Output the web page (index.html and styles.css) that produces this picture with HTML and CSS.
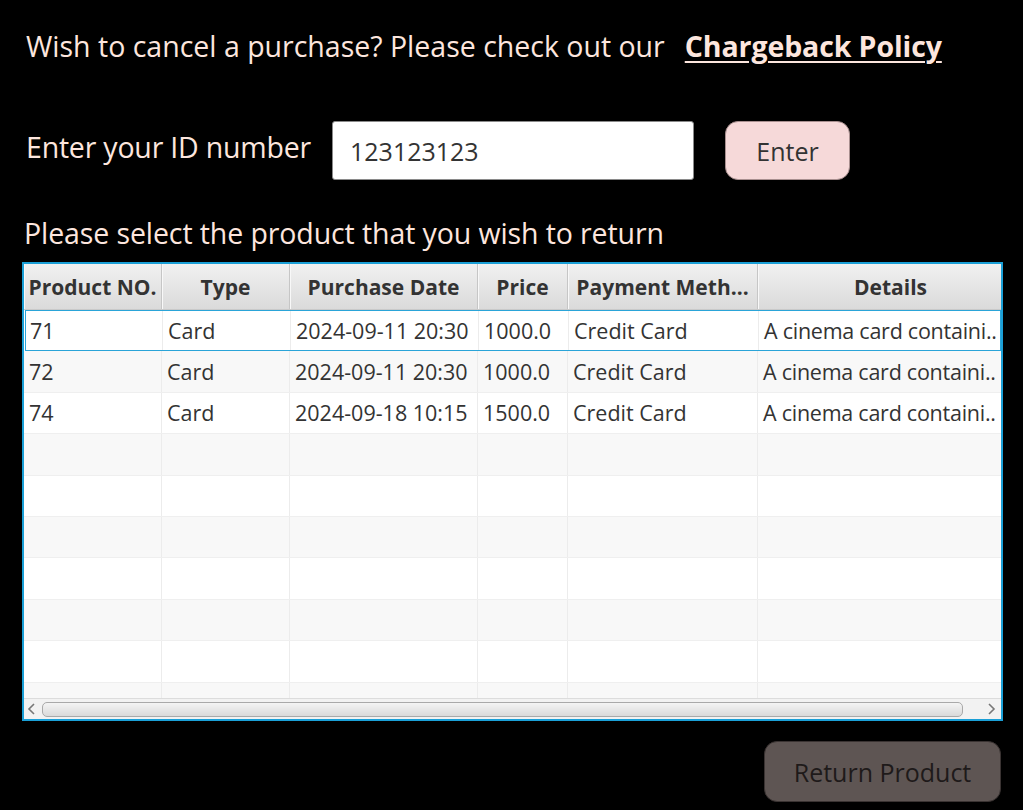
FILE: index.html
```html
<!DOCTYPE html>
<html>
<head>
<meta charset="utf-8">
<link rel="stylesheet" href="styles.css">
</head>
<body>
<div class="page">
  <div class="policy">
    <span class="policy-text">Wish to cancel a purchase? Please check out our</span>
    <a class="policy-link" href="#">Chargeback Policy</a>
  </div>
  <div class="id-row">
    <span class="id-label">Enter your ID number</span>
    <div class="id-input">123123123</div>
    <button class="btn-enter">Enter</button>
  </div>
  <div class="prompt">Please select the product that you wish to return</div>
  <div class="table">
    <div class="thead">
      <div class="th">Product NO.</div>
      <div class="th">Type</div>
      <div class="th">Purchase Date</div>
      <div class="th">Price</div>
      <div class="th">Payment Meth...</div>
      <div class="th">Details</div>
    </div>
    <div class="tbody">
      <div class="tr odd focused">
        <div class="td">71</div><div class="td">Card</div><div class="td">2024-09-11 20:30</div><div class="td">1000.0</div><div class="td">Credit Card</div><div class="td">A cinema card containi..</div>
      </div>
      <div class="tr even">
        <div class="td">72</div><div class="td">Card</div><div class="td">2024-09-11 20:30</div><div class="td">1000.0</div><div class="td">Credit Card</div><div class="td">A cinema card containi..</div>
      </div>
      <div class="tr odd">
        <div class="td">74</div><div class="td">Card</div><div class="td">2024-09-18 10:15</div><div class="td">1500.0</div><div class="td">Credit Card</div><div class="td">A cinema card containi..</div>
      </div>
      <div class="tr even"><div class="td"></div><div class="td"></div><div class="td"></div><div class="td"></div><div class="td"></div><div class="td"></div></div>
      <div class="tr odd"><div class="td"></div><div class="td"></div><div class="td"></div><div class="td"></div><div class="td"></div><div class="td"></div></div>
      <div class="tr even"><div class="td"></div><div class="td"></div><div class="td"></div><div class="td"></div><div class="td"></div><div class="td"></div></div>
      <div class="tr odd"><div class="td"></div><div class="td"></div><div class="td"></div><div class="td"></div><div class="td"></div><div class="td"></div></div>
      <div class="tr even"><div class="td"></div><div class="td"></div><div class="td"></div><div class="td"></div><div class="td"></div><div class="td"></div></div>
      <div class="tr odd"><div class="td"></div><div class="td"></div><div class="td"></div><div class="td"></div><div class="td"></div><div class="td"></div></div>
      <div class="tr even"><div class="td"></div><div class="td"></div><div class="td"></div><div class="td"></div><div class="td"></div><div class="td"></div></div>
    </div>
    <div class="hscroll">
      <svg class="arrow" width="12" height="14" viewBox="0 0 12 14"><path d="M8 2 L3 7 L8 12" fill="none" stroke="#777" stroke-width="1.6"/></svg>
      <div class="thumb"></div>
      <svg class="arrow" width="12" height="14" viewBox="0 0 12 14"><path d="M4 2 L9 7 L4 12" fill="none" stroke="#777" stroke-width="1.6"/></svg>
    </div>
  </div>
  <div class="actions">
    <button class="btn-return">Return Product</button>
  </div>
</div>
</body>
</html>
```

FILE: styles.css
```css
html, body {
  margin: 0;
  padding: 0;
  background: #000;
}
.page {
  font-family: "Open Sans", "Noto Sans", sans-serif;
  width: 1023px;
  height: 810px;
  box-sizing: border-box;
  padding: 0 0 0 22px;
  color: #fde6de;
}
.policy {
  display: flex;
  align-items: baseline;
  padding: 27px 0 0 4px;
  height: 60px;
  box-sizing: border-box;
}
.policy-text {
  font-size: 28.5px;
}
.policy-link {
  margin-left: 20px;
  font-size: 28.5px;
  font-weight: 700;
  color: #fde6de;
  text-decoration: underline;
  text-decoration-thickness: 2px;
  text-underline-offset: 4px;
  letter-spacing: -0.1px;
}
.id-row {
  display: flex;
  align-items: center;
  margin-top: 61px;
  height: 59px;
}
.id-label {
  font-size: 28.5px;
  padding-left: 4px;
  margin-top: -8px;
  width: 306px;
  letter-spacing: -0.2px;
}
.id-input {
  width: 362px;
  height: 59px;
  box-sizing: border-box;
  background: #fff;
  border: 1px solid #8a8a8a;
  border-radius: 3px;
  color: #333;
  font-size: 25px;
  padding-left: 17px;
  display: flex;
  align-items: center;
}
.btn-enter {
  margin-left: 31px;
  width: 125px;
  height: 59px;
  background: #f6d9d9;
  border: 1px solid #a88f8f;
  border-radius: 13px;
  font-family: "Open Sans", "Noto Sans", sans-serif;
  font-size: 25px;
  color: #333;
  padding: 0;
}
.prompt {
  margin-top: 34px;
  font-size: 28.5px;
  padding-left: 2px;
  height: 48px;
  letter-spacing: -0.1px;
}
.table {
  width: 981px;
  height: 459px;
  box-sizing: border-box;
  border: 2px solid #1a9fd6;
  background: #fff;
  display: flex;
  flex-direction: column;
  overflow: hidden;
  color: #333;
}
.thead, .tr {
  display: grid;
  grid-template-columns: 138px 128px 188px 90px 190px 243px;
}
.thead {
  height: 46px;
  background: linear-gradient(#f1f1f1, #dadada);
  border-bottom: 1px solid #c9c9c9;
  box-sizing: border-box;
}
.th {
  font-size: 21px;
  font-weight: 700;
  display: flex;
  align-items: center;
  justify-content: center;
  border-right: 1px solid #c6c6c6;
  box-shadow: inset 1px 0 0 #f8f8f8;
  white-space: nowrap;
}
.th:last-child {
  border-right: none;
  padding-left: 22px;
}
.tbody {
  flex: 1;
  overflow: hidden;
}
.tr {
  height: 41.4px;
  box-sizing: border-box;
  border-bottom: 1px solid #efefef;
}
.tr.odd { background: #fff; }
.tr.even { background: #f8f8f8; }
.tr.focused {
  outline: 1px solid #2aa4d8;
  outline-offset: -1px;
  margin: 0 0 0 1px;
}
.td {
  font-size: 21.5px;
  display: flex;
  align-items: center;
  padding-left: 5px;
  border-right: 1px solid #ececec;
  white-space: nowrap;
  overflow: hidden;
}
.td:last-child {
  border-right: none;
  letter-spacing: -0.25px;
}
.hscroll {
  height: 20px;
  flex: none;
  background: #f2f2f2;
  border-top: 1px solid #dcdcdc;
  display: flex;
  align-items: center;
  padding: 0 4px 0 2px;
  gap: 4px;
}
.arrow {
  flex: none;
}
.thumb {
  flex: 1;
  height: 15px;
  box-sizing: border-box;
  border: 1px solid #a9a9a9;
  border-radius: 5px;
  background: linear-gradient(#f4f4f4, #dadada);
  margin-right: 18px;
}
.actions {
  display: flex;
  justify-content: flex-end;
  width: 979px;
  margin-top: 20px;
}
.btn-return {
  width: 237px;
  height: 61px;
  background: #5e5553;
  border: 1px solid #3a3332;
  border-radius: 13px;
  font-family: "Open Sans", "Noto Sans", sans-serif;
  font-size: 25px;
  color: #1e1a1a;
  padding: 0;
}
```
